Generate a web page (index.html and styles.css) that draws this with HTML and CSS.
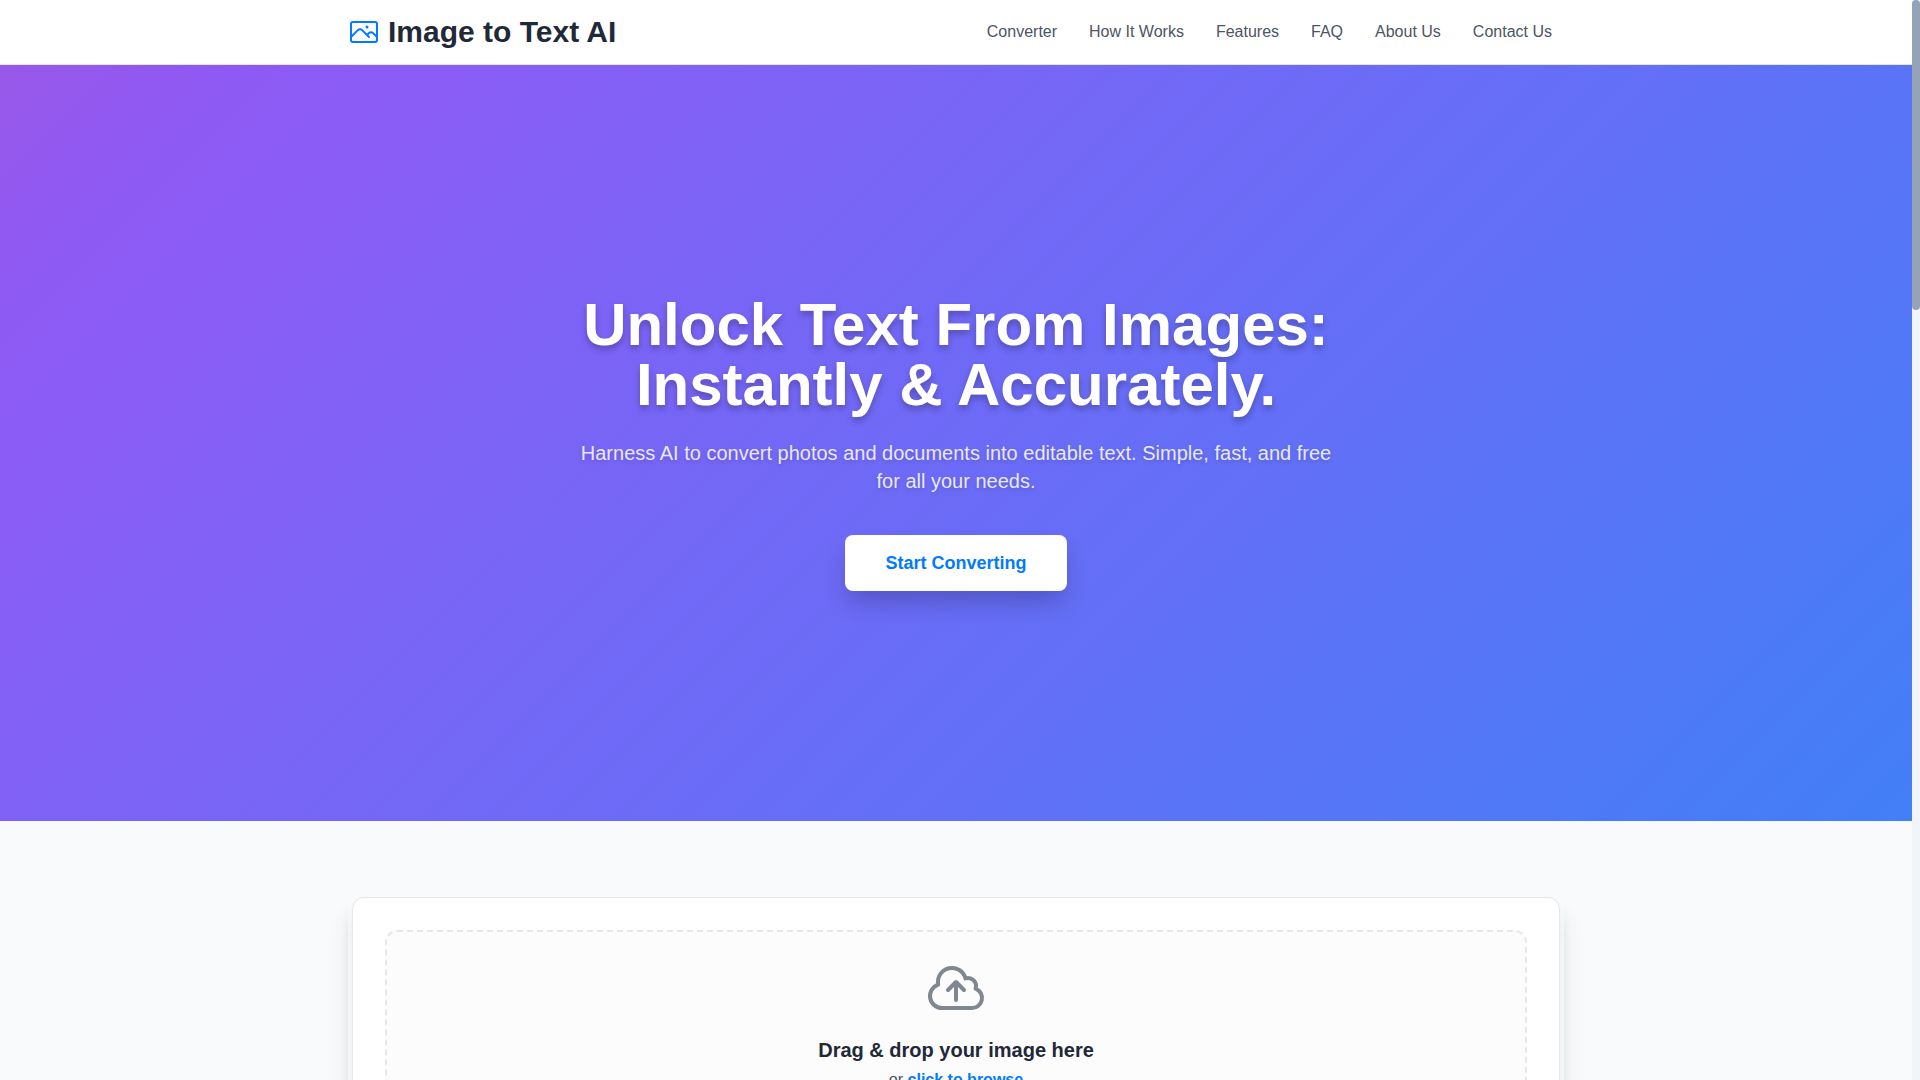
FILE: index.html
```html
<!DOCTYPE html>
<html lang="en">
<head>
<meta charset="utf-8">
<meta name="viewport" content="width=device-width, initial-scale=1">
<title>Image to Text AI</title>
<link rel="stylesheet" href="styles.css">
</head>
<body>
<div class="page">
  <header class="site-header">
    <div class="header-inner">
      <a class="brand" href="#">
        <svg class="brand-icon" viewBox="0 0 24 24" aria-hidden="true"><path d="m2.25 15.75 5.159-5.159a2.25 2.25 0 0 1 3.182 0l5.159 5.159m-1.5-1.5 1.409-1.409a2.25 2.25 0 0 1 3.182 0l2.909 2.909m-18 3.75h16.5a1.5 1.5 0 0 0 1.5-1.5V6a1.5 1.5 0 0 0-1.5-1.5H3.75A1.5 1.5 0 0 0 2.25 6v12a1.5 1.5 0 0 0 1.5 1.5Zm10.5-11.25h.008v.008h-.008V8.25Zm.375 0a.375.375 0 1 1-.75 0 .375.375 0 0 1 .75 0Z"/></svg>
        <span>Image to Text AI</span>
      </a>
      <nav class="nav">
        <a href="#converter">Converter</a>
        <a href="#how">How It Works</a>
        <a href="#features">Features</a>
        <a href="#faq">FAQ</a>
        <a href="#about">About Us</a>
        <a href="#contact">Contact Us</a>
      </nav>
    </div>
  </header>
  <main>
    <section class="hero">
      <div class="hero-inner">
        <h1>Unlock Text From Images: Instantly &amp; Accurately.</h1>
        <p>Harness AI to convert photos and documents into editable text. Simple, fast, and free for all your needs.</p>
        <button class="cta" type="button">Start Converting</button>
      </div>
    </section>
    <section class="converter" id="converter">
      <div class="card-frame">
        <div class="card">
          <div class="dropzone">
            <svg class="cloud" viewBox="0 0 24 24" aria-hidden="true"><path d="M12 16.5V9.75m0 0 3 3m-3-3-3 3M6.75 19.5a4.5 4.5 0 0 1-1.41-8.775 5.25 5.25 0 0 1 10.233-2.33 3 3 0 0 1 3.758 3.848A3.752 3.752 0 0 1 18 19.5H6.75Z"/></svg>
            <h2>Drag &amp; drop your image here</h2>
            <p>or <a href="#browse">click to browse</a></p>
          </div>
        </div>
      </div>
    </section>
  </main>
</div>
<div class="scroll-track" aria-hidden="true"><div class="scroll-thumb"></div></div>
</body>
</html>
```
FILE: styles.css
```css
* { box-sizing: border-box; }

body {
  margin: 0;
  display: flex;
  height: 100vh;
  overflow: hidden;
  background: #f9fafb;
  color: #1f2937;
  font-family: "Liberation Sans", Arial, sans-serif;
  font-size: 16px;
  line-height: 24px;
}

h1, h2, p { margin: 0; }
a { color: inherit; text-decoration: none; }
svg { fill: none; stroke: currentColor; stroke-width: 1.5; stroke-linecap: round; stroke-linejoin: round; }

.page { flex: 1; height: 100%; overflow-y: auto; scrollbar-width: none; }

.site-header { background: #fff; border-bottom: 1px solid #e5e7eb; }
.header-inner {
  display: flex;
  align-items: center;
  justify-content: space-between;
  max-width: 1280px;
  margin: 0 auto;
  padding: 12px 32px;
}
.brand { display: flex; align-items: center; gap: 8px; font-size: 30px; font-weight: 700; line-height: 40px; }
.brand-icon { width: 32px; height: 32px; color: #007bff; }
.nav { display: flex; gap: 32px; padding-right: 12px; color: #4b5563; }

.hero {
  display: flex;
  align-items: center;
  justify-content: center;
  min-height: 70vh;
  padding: 80px 24px;
  background: linear-gradient(135deg, #9858e8 0%, #8f59f3 8%, #8b5cf6 15%, #427ff7 100%);
  color: #fff;
  text-align: center;
}
.hero-inner { max-width: 768px; }
.hero h1 { font-size: 60px; line-height: 60px; margin-bottom: 24px; text-shadow: 0 4px 6px rgba(0, 0, 0, .25); }
.hero p { font-size: 20px; line-height: 28px; margin-bottom: 40px; color: #e8e8fe; text-shadow: 0 2px 4px rgba(0, 0, 0, .15); }
.cta {
  padding: 14px 40px;
  border: 0;
  border-radius: 8px;
  background: #fff;
  color: #007bff;
  font: 700 18px/28px "Liberation Sans", Arial, sans-serif;
  box-shadow: 0 14px 25px -4px rgba(0, 0, 0, .22);
}

.converter { padding: 72px 32px; }
.card-frame {
  max-width: 1216px;
  margin: 0 auto;
  padding: 4px;
  border-radius: 12px;
  box-shadow: 0 20px 25px -5px rgba(0, 0, 0, .15);
}
.card {
  padding: 32px;
  border: 1px solid #e5e7eb;
  border-radius: 12px;
  background: #fff;
  box-shadow: 0 10px 15px -3px rgba(0, 0, 0, .1);
}
.dropzone {
  display: flex;
  flex-direction: column;
  align-items: center;
  padding: 24px 32px 48px;
  border: 2px dashed #e5e7eb;
  border-radius: 12px;
  background: #fcfcfc;
}
.cloud { width: 64px; height: 64px; color: #808790; margin-bottom: 16px; }
.dropzone h2 { font-size: 20px; line-height: 28px; }
.dropzone p { color: #4b5563; margin-top: 4px; }
.dropzone a { color: #007bff; font-weight: 700; }

.scroll-track { width: 8px; background: #f1f5f9; }
.scroll-thumb { height: 310px; border-radius: 4px; background: #94a3b8; }
```
